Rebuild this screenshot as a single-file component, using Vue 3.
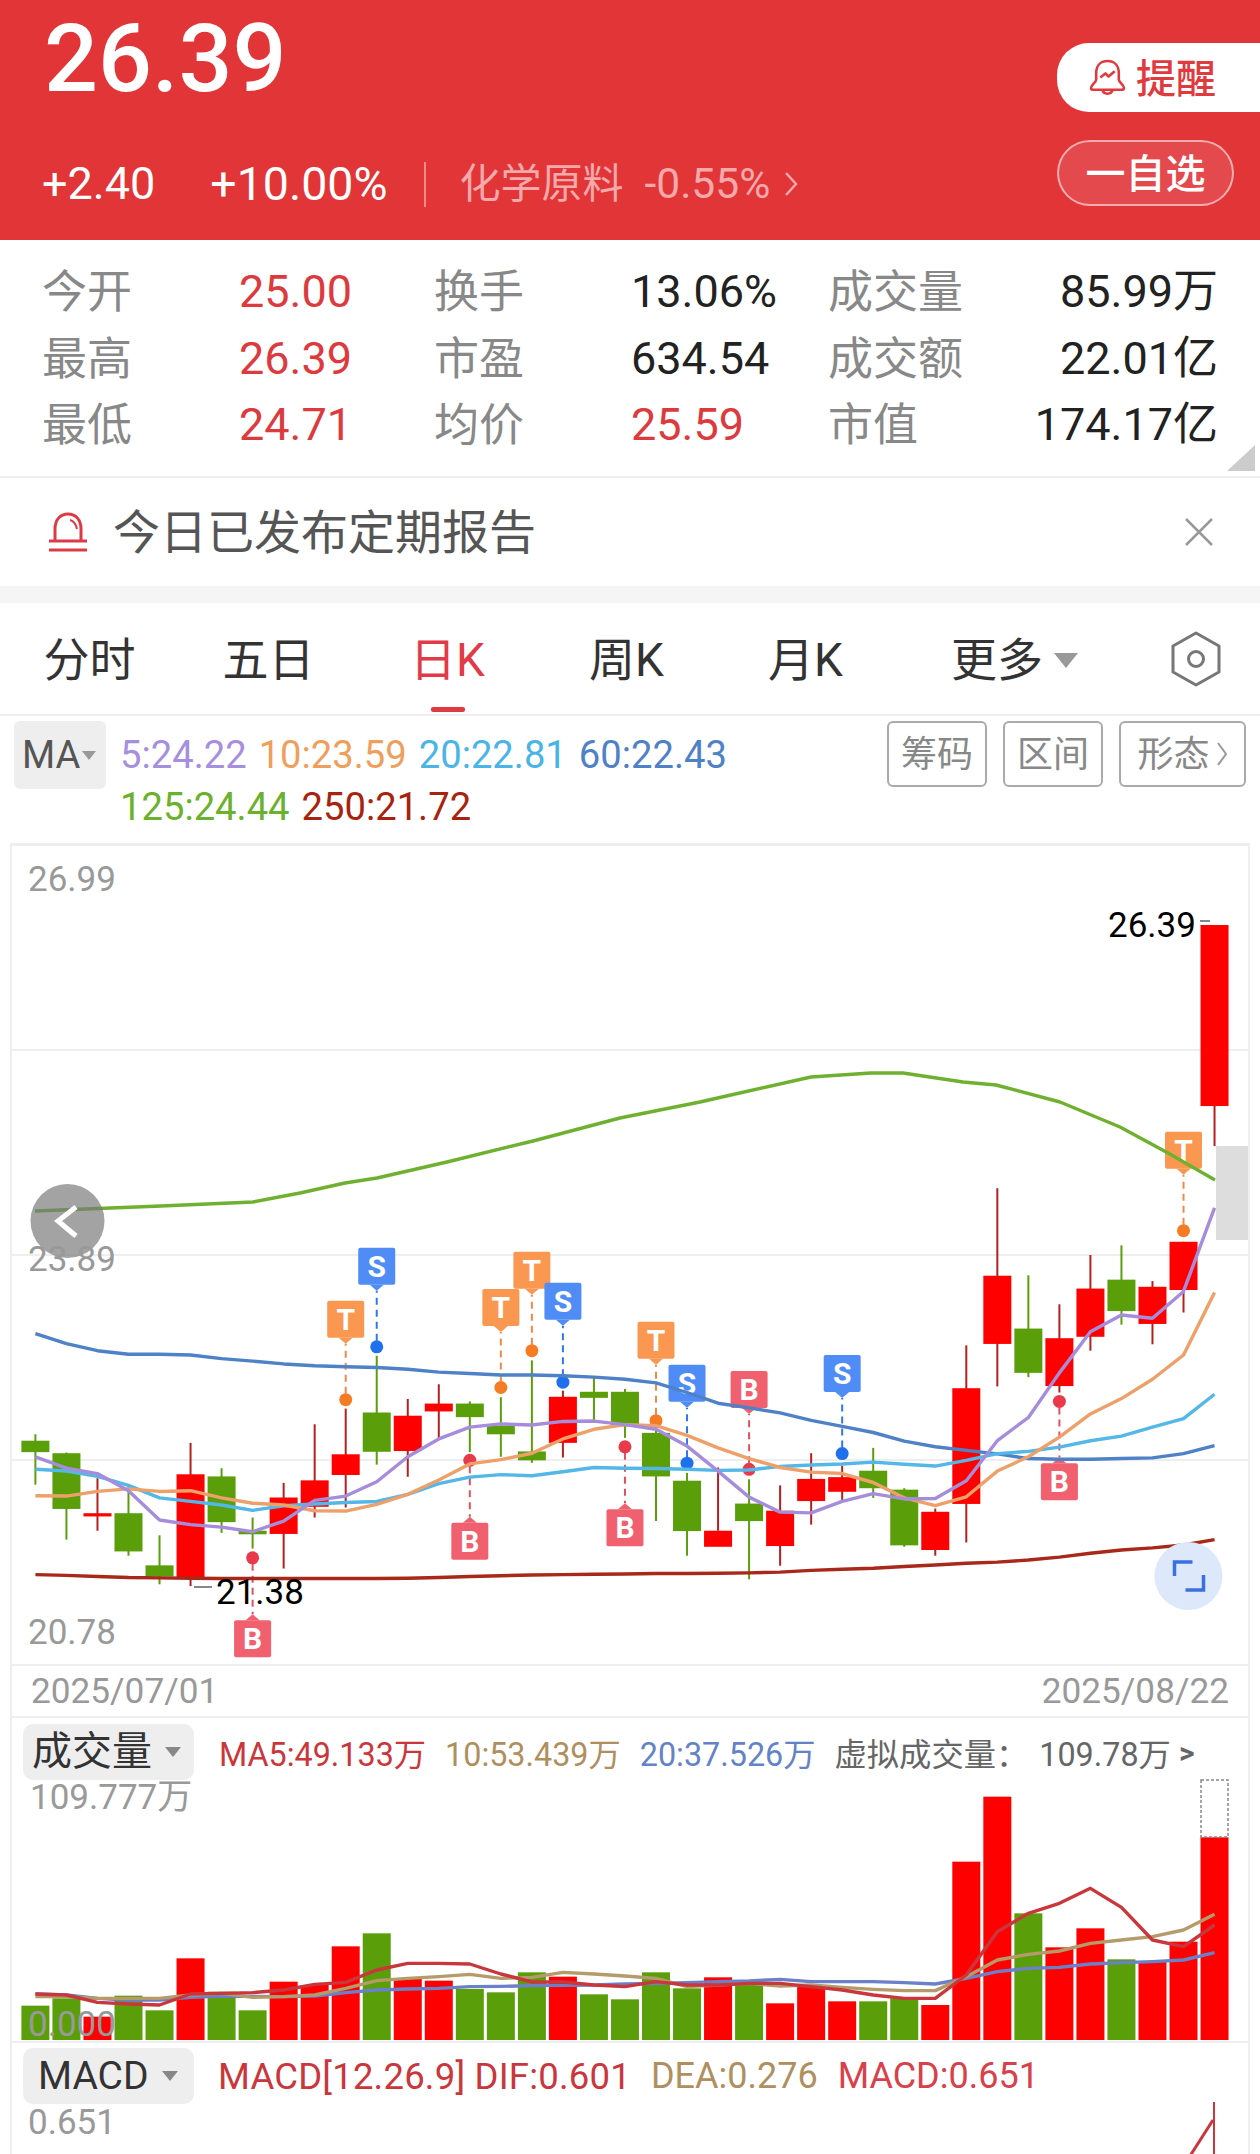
<template>
  <div class="page">
    <!-- 顶部行情 -->
    <header class="quote">
      <div class="quote-left">
        <div class="price">26.39</div>
        <div class="change">
          <span>+2.40</span>
          <span class="pct">+10.00%</span>
          <i class="divider" />
          <span class="sector">化学原料</span>
          <span class="sector-pct">-0.55%</span>
          <svg class="sector-arrow" viewBox="0 0 14 26"><path d="M2 2l10 11L2 24" /></svg>
        </div>
      </div>
      <div class="quote-right">
        <div class="remind">
          <svg viewBox="0 0 36 36" class="bell">
            <path d="M18 2C10 2 7 8 7 14v6c0 3-5 5-5 8 0 1.500 1 2 2 2h28c1 0 2-.5 2-2 0-3-5-5-5-8v-6C29 8 26 2 18 2z" />
            <path d="M11 18l5-4 3 3 6-5" />
            <path d="M13 30c1 5 9 5 10 0" />
          </svg>
          <span class="remind-text">提醒</span>
        </div>
        <div class="watch">一自选</div>
      </div>
    </header>

    <!-- 盘口数据 -->
    <section class="stats">
      <template v-for="s in stats" :key="s.label">
        <span class="stat-label">{{ s.label }}</span>
        <span :class="['stat-value', s.cls]">{{ s.value }}</span>
      </template>
      <svg class="corner" viewBox="0 0 28 26"><polygon points="0,26 28,26 28,0" /></svg>
    </section>

    <section class="notice">
      <svg class="notice-icon" viewBox="0 0 40 40">
        <path d="M7 29V17C7 8 12 2 20 2s13 6 13 15v12" />
        <path d="M1 29h38M1 38h38" />
        <path d="M22 8c4 1 6 4 7 9" stroke-width="2" />
      </svg>
      <span class="notice-text">今日已发布定期报告</span>
      <svg class="notice-close" viewBox="0 0 30 30"><path d="M2 2l26 26M28 2L2 28" /></svg>
    </section>
    <div class="band" />

    <!-- 周期切换 -->
    <nav class="tabs">
      <span v-for="t in tabs" :key="t" :class="['tab', { active: t === '日K' }]">{{ t }}</span>
      <span class="tab more">更多<i class="tri tri-more" /></span>
      <svg class="hex" viewBox="0 0 50 56">
        <polygon points="25,2 48,15 48,41 25,54 2,41 2,15" />
        <circle cx="25" cy="28" r="7.5" />
      </svg>
    </nav>

    <section class="ma-row">
      <div class="ma-chip">MA<i class="tri tri-ma" /></div>
      <div class="ma-values">
        <div>
          <span style="color: #a78fe0">5:24.22</span>
          <span style="color: #ef9f5c">10:23.59</span>
          <span style="color: #4ab4e6">20:22.81</span>
          <span style="color: #4f81c7">60:22.43</span>
        </div>
        <div>
          <span style="color: #6cb12d">125:24.44</span>
          <span style="color: #a8230f">250:21.72</span>
        </div>
      </div>
      <div class="ma-tools">
        <span class="tool">筹码</span>
        <span class="tool">区间</span>
        <span class="tool tool-wide">形态<svg viewBox="0 0 12 26"><path d="M2 2l8 11-8 11" /></svg></span>
      </div>
    </section>

    <div class="panels">
      <!-- K线 -->
      <div class="kline">
        <svg class="plot" width="1236" height="818" viewBox="12 846 1236 818">
          <line v-for="y in [1050, 1255, 1460]" :key="y" x1="12" x2="1248" :y1="y" :y2="y" stroke="#eee" stroke-width="2" />
          <g v-for="(c, i) in candles" :key="i">
            <line :x1="cx(i)" :x2="cx(i)" :y1="ky(c[2])" :y2="ky(c[3])" :stroke="c[4] === 'r' ? '#b3201f' : '#5a9e0a'" stroke-width="2" />
            <rect :x="cx(i) - 14" :y="ky(c[0])" width="28" :height="ky(c[1]) - ky(c[0])" :fill="c[4] === 'r' ? '#ff0000' : '#5a9e0a'" />
          </g>
          <g v-for="m in markers" :key="m.i + m.t">
            <line :x1="cx(m.i)" :x2="cx(m.i)" :y1="m.dashA" :y2="m.dashB" :stroke="m.line" stroke-width="2" stroke-dasharray="7 5" />
            <circle :cx="cx(m.i)" :cy="m.dotY" r="6.5" :fill="m.dot" />
            <rect :x="cx(m.i) - 18.5" :y="m.boxY" width="37" height="37" rx="2" :fill="m.box" />
            <polygon :points="m.tip" :fill="m.box" />
            <text :x="cx(m.i)" :y="m.boxY + 29" class="mark-text" text-anchor="middle">{{ m.t }}</text>
          </g>
          <polyline v-for="l in kLines" :key="l.color" :points="l.points" fill="none" :stroke="l.color" stroke-width="3.4" stroke-linejoin="round" />
          <polyline points="35,1211 161,1206 253,1202 300,1193 345,1183 377,1178 447,1162 533,1141 620,1118 700,1102 722,1097 811,1077 871,1073 903,1073 963,1082 996,1085 1060,1102 1120,1127 1168,1153 1215,1180" fill="none" stroke="#6fb030" stroke-width="3.4" stroke-linejoin="round" />
          <rect x="1216" y="1146" width="32" height="94" fill="#ddd" />
          <circle cx="67.5" cy="1221" r="37" fill="#777" fill-opacity="0.68" />
          <path d="M76 1207l-18 14 18 15" fill="none" stroke="#fff" stroke-width="5" />
          <circle cx="1188.5" cy="1576" r="34" fill="#dde8fa" />
          <path d="M1174.5 1576v-14h18M1203.5 1575v15h-18" fill="none" stroke="#3a70e0" stroke-width="3.5" />
          <text x="28" y="891" class="axis">26.99</text>
          <text x="28" y="1271" class="axis">23.89</text>
          <text x="28" y="1644" class="axis">20.78</text>
          <text x="1108" y="937" class="peak">26.39</text>
          <line x1="1200" x2="1210" y1="921" y2="921" stroke="#888" stroke-width="2" />
          <text x="216" y="1604" class="peak">21.38</text>
          <line x1="194" x2="212" y1="1587" y2="1587" stroke="#888" stroke-width="2" />
        </svg>
      </div>

      <div class="dates">
        <span>2025/07/01</span>
        <span>2025/08/22</span>
      </div>

      <!-- 成交量 -->
      <div class="vol">
        <svg class="plot" width="1236" height="323" viewBox="12 1718 1236 323">
          <rect v-for="(v, i) in volumes" :key="i" :x="cx(i) - 14" :y="vy(v[0])" width="28" :height="2040 - vy(v[0])" :fill="v[1] === 'r' ? '#ff0000' : '#5a9e0a'" />
          <rect x="1201" y="1780" width="27" height="57" fill="none" stroke="#888" stroke-width="1.5" stroke-dasharray="3 2" />
          <polyline v-for="l in volLines" :key="l.color" :points="l.points" fill="none" :stroke="l.color" stroke-width="3.4" stroke-linejoin="round" />
          <text x="30" y="1809" class="axis">109.777万</text>
          <text x="28" y="2036" class="axis">0.000</text>
        </svg>
        <div class="sub-head">
          <div class="sub-chip">成交量<i class="tri tri-sub" /></div>
          <span class="vol-ma" style="color: #c9373c">MA5:49.133万</span>
          <span class="vol-ma" style="color: #b08f5f">10:53.439万</span>
          <span class="vol-ma" style="color: #6283c6">20:37.526万</span>
          <span class="vol-ma virtual">虚拟成交量：</span>
          <span class="vol-ma virtual amount">109.78万</span>
          <span class="vol-ma virtual gt">&gt;</span>
        </div>
      </div>

      <!-- MACD -->
      <div class="macd">
        <svg class="plot" width="1236" height="111" viewBox="12 2043 1236 111">
          <line x1="1214" x2="1214" y1="2102" y2="2154" stroke="#c9373c" stroke-width="2" />
          <polyline points="1190,2156 1213,2120" fill="none" stroke="#c9373c" stroke-width="3" />
          <text x="28" y="2134" class="axis">0.651</text>
        </svg>
        <div class="sub-head">
          <div class="sub-chip macd-chip">MACD<i class="tri tri-sub" /></div>
          <span class="macd-text macd-first" style="color: #c9373c">MACD[12.26.9] DIF:0.601</span>
          <span class="macd-text" style="color: #b08f5f">DEA:0.276</span>
          <span class="macd-text" style="color: #d8404a">MACD:0.651</span>
        </div>
      </div>
    </div>
  </div>
</template>

<script setup>
const stats = [
  { label: '今开', value: '25.00', cls: 'red' },
  { label: '换手', value: '13.06%' },
  { label: '成交量', value: '85.99万', cls: 'end' },
  { label: '最高', value: '26.39', cls: 'red' },
  { label: '市盈', value: '634.54' },
  { label: '成交额', value: '22.01亿', cls: 'end' },
  { label: '最低', value: '24.71', cls: 'red' },
  { label: '均价', value: '25.59', cls: 'red' },
  { label: '市值', value: '174.17亿', cls: 'end' },
];

const tabs = ['分时', '五日', '日K', '周K', '月K'];

// 坐标换算：蜡烛等距排列，k线和量图各自一个纵向比例
const cx = (i) => 35.4 + 31.03 * i;
const ky = (v) => 1130 + v / 2.8;
const vy = (v) => 1670 + v / 3;

// [实体上, 实体下, 影线上, 影线下, 颜色]
const candles = [
  [870, 902, 852, 993, 'g'], [905, 1061, 903, 1147, 'g'], [1073, 1082, 975, 1122, 'r'], [1073, 1180, 993, 1192, 'g'],
  [1219, 1250, 1135, 1272, 'g'], [964, 1255, 876, 1277, 'r'], [970, 1098, 947, 1128, 'g'], [1122, 1132, 1085, 1172, 'g'],
  [1029, 1131, 988, 1228, 'r'], [981, 1055, 824, 1085, 'r'], [908, 966, 780, 1057, 'r'], [791, 901, 632, 937, 'g'],
  [800, 899, 753, 971, 'r'], [766, 788, 712, 862, 'r'], [766, 804, 760, 902, 'g'], [828, 852, 748, 915, 'g'],
  [900, 925, 645, 932, 'g'], [747, 876, 730, 917, 'r'], [733, 750, 690, 812, 'g'], [733, 830, 725, 862, 'g'],
  [848, 970, 820, 1095, 'g'], [982, 1123, 960, 1192, 'g'], [1122, 1167, 945, 1122, 'r'], [1046, 1095, 978, 1258, 'g'],
  [1066, 1165, 995, 1220, 'r'], [977, 1039, 905, 1105, 'r'], [972, 1013, 940, 1040, 'r'], [954, 1003, 890, 1030, 'g'],
  [1007, 1163, 1003, 1167, 'g'], [1069, 1176, 1060, 1192, 'r'], [723, 1047, 603, 1155, 'r'], [408, 599, 163, 718, 'r'],
  [556, 680, 407, 692, 'g'], [583, 717, 488, 735, 'r'], [444, 579, 350, 618, 'r'], [419, 507, 323, 545, 'g'],
  [439, 543, 423, 600, 'r'], [313, 448, 313, 511, 'r'], [-574, -67, -574, 45, 'r'],
];

const toLine = (ys, toY) => ys.map((y, i) => `${cx(i)},${toY(y)}`).join(' ');

const kLines = [
  { color: '#a8281a', ys: [1245, 1247, 1250, 1253, 1254, 1255, 1256, 1256, 1256, 1256, 1256, 1256, 1255, 1253, 1250, 1248, 1246, 1245, 1244, 1243, 1242, 1242, 1241, 1240, 1238, 1233, 1230, 1227, 1222, 1218, 1213, 1210, 1204, 1196, 1185, 1176, 1170, 1162, 1147] },
  { color: '#4f81c7', ys: [570, 598, 618, 628, 628, 630, 640, 647, 655, 660, 663, 665, 670, 678, 682, 686, 686, 688, 692, 698, 708, 735, 765, 778, 792, 813, 830, 847, 871, 887, 897, 907, 920, 922, 922, 920, 918, 906, 884] },
  { color: '#53b7e8', ys: [950, 955, 970, 995, 1030, 1040, 1050, 1065, 1052, 1047, 1043, 1040, 1020, 990, 972, 965, 968, 957, 945, 947, 948, 950, 953, 952, 942, 938, 935, 930, 936, 941, 925, 906, 900, 888, 870, 857, 832, 808, 740] },
  { color: '#eda06a', ys: [1024, 1025, 1012, 1005, 1012, 1010, 1030, 1045, 1050, 1066, 1067, 1048, 1020, 980, 935, 923, 905, 865, 838, 825, 828, 855, 890, 920, 945, 958, 962, 987, 1030, 1052, 1027, 955, 915, 860, 795, 752, 698, 630, 455] },
  { color: '#a68ddb', ys: [915, 947, 962, 1010, 1092, 1105, 1112, 1125, 1095, 1037, 1025, 985, 915, 865, 832, 823, 826, 816, 815, 825, 838, 885, 955, 1028, 1070, 1072, 1040, 1018, 1033, 1032, 982, 870, 805, 680, 565, 518, 527, 452, 218] },
].map((l) => ({ color: l.color, points: toLine(l.ys, ky) }));

const markerColors = {
  T: { box: '#fa9750', dot: '#f57c23', line: '#f08a4a' },
  S: { box: '#4f8cf5', dot: '#1f70ef', line: '#2f78e8' },
  B: { box: '#f0606f', dot: '#e83a4a', line: '#e0505e' },
};

// [蜡烛序号, 类型, 方框顶, 圆点, 尖角向上?]
const markers = [
  [10, 'T', 478, 755], [11, 'S', 330, 607], [15, 'T', 445, 721], [16, 'T', 341, 618], [17, 'S', 428, 706],
  [20, 'T', 537, 814], [21, 'S', 657, 933], [23, 'B', 675, 950], [26, 'S', 630, 906], [37, 'T', 5, 282],
  [7, 'B', 1373, 1198, true], [14, 'B', 1100, 925, true], [19, 'B', 1062, 887, true], [33, 'B', 933, 760, true],
].map(([i, t, box, dot, up]) => {
  const boxY = ky(box);
  const dotY = ky(dot);
  const x = cx(i);
  const tipY = up ? boxY - 6 : boxY + 43;
  const edgeY = up ? boxY : boxY + 37;
  return {
    i, t, boxY, dotY,
    dashA: up ? dotY + 6 : dotY - 6,
    dashB: tipY,
    tip: `${x - 7},${edgeY} ${x + 7},${edgeY} ${x},${tipY}`,
    ...markerColors[t],
  };
});

const volumes = [
  [1007, 'g'], [985, 'g'], [1040, 'r'], [977, 'g'], [1021, 'g'], [865, 'r'], [965, 'g'], [1021, 'g'], [935, 'r'], [945, 'r'],
  [829, 'r'], [790, 'g'], [925, 'r'], [932, 'r'], [957, 'g'], [967, 'g'], [907, 'g'], [920, 'r'], [973, 'g'], [988, 'g'],
  [907, 'g'], [955, 'g'], [922, 'r'], [945, 'g'], [1000, 'r'], [945, 'r'], [994, 'r'], [994, 'g'], [985, 'g'], [1005, 'r'],
  [575, 'r'], [380, 'r'], [730, 'g'], [832, 'r'], [775, 'r'], [868, 'g'], [875, 'r'], [815, 'r'], [502, 'r'],
];

const volLines = [
  { color: '#6a80c8', ys: [972, 975, 985, 990, 990, 982, 978, 979, 980, 978, 968, 960, 957, 955, 950, 949, 947, 946, 945, 942, 940, 938, 935, 933, 928, 935, 935, 935, 938, 942, 925, 905, 895, 892, 882, 878, 875, 870, 848] },
  { color: '#b59a6a', ys: [980, 980, 985, 985, 985, 975, 970, 982, 980, 975, 955, 932, 925, 920, 913, 925, 922, 907, 912, 918, 925, 950, 945, 940, 948, 945, 952, 958, 962, 962, 920, 870, 853, 843, 820, 810, 800, 780, 733] },
  { color: '#c9373c', ys: [972, 975, 997, 1002, 1005, 972, 970, 968, 960, 943, 937, 900, 880, 880, 882, 912, 936, 936, 945, 950, 935, 945, 945, 940, 940, 950, 960, 975, 985, 985, 915, 785, 730, 700, 655, 712, 810, 830, 765] },
].map((l) => ({ color: l.color, points: toLine(l.ys, vy) }));
</script>

<style scoped>
.page {
  width: 1260px;
  background: #fff;
  overflow: hidden;
  font-family: Roboto, "Noto Sans CJK SC", sans-serif;
}

.quote {
  height: 240px;
  background: #e13538;
  color: #fff;
  display: flex;
  justify-content: space-between;
  padding-left: 44px;
}
.price {
  font-size: 95px;
  line-height: 117px;
  font-weight: 500;
}
.change {
  display: flex;
  align-items: center;
  height: 52px;
  margin-top: 41px;
  margin-left: -2px;
  font-size: 45px;
  line-height: 52px;
}
.pct {
  margin-left: 55px;
  font-size: 46.5px;
}
.divider {
  width: 2px;
  height: 45px;
  margin: 0 34px 0 36px;
  background: #ee8a8c;
}
.sector {
  font-size: 41px;
  color: #f5a9aa;
}
.sector-pct {
  margin-left: 21px;
  font-size: 42.5px;
  color: #f5a9aa;
}
.sector-arrow {
  width: 14px;
  height: 26px;
  margin-left: 14px;
  fill: none;
  stroke: #f5a9aa;
  stroke-width: 2.5;
}
.quote-right {
  display: flex;
  flex-direction: column;
  padding-top: 43px;
}
.remind {
  width: 203px;
  height: 69px;
  background: #fff;
  border-radius: 32px 0 0 32px;
  color: #e0393e;
  display: flex;
  align-items: center;
  padding-left: 32px;
  box-sizing: border-box;
  font-size: 40px;
  font-weight: 500;
  line-height: 69px;
}
.remind-text {
  margin-top: 4px;
}
.bell {
  width: 37px;
  height: 37px;
  margin-right: 10px;
  fill: none;
  stroke: #e0393e;
  stroke-width: 2.5;
  stroke-linejoin: round;
}
.watch {
  width: 177px;
  height: 66px;
  margin-top: 28px;
  box-sizing: border-box;
  border: 2px solid rgba(255, 255, 255, 0.55);
  border-radius: 33px;
  background: #e4494d;
  text-align: center;
  font-size: 40px;
  font-weight: 500;
  line-height: 66px;
}

.stats {
  position: relative;
  height: 238px;
  box-sizing: border-box;
  padding: 19px 42px 0;
  border-bottom: 2px solid #eee;
  display: grid;
  grid-template-columns: 197px 195px 197px 197px 140px 1fr;
  grid-auto-rows: 66.5px;
  align-items: center;
  font-size: 45px;
  color: #222;
}
.stat-label {
  line-height: 56px;
  margin-top: 2px;
  font-size: 45px;
  color: #888;
}
.stat-value {
  line-height: 54px;
}
.stat-value.red {
  color: #dd3a3e;
}
.stat-value.end {
  text-align: right;
}
.corner {
  position: absolute;
  right: 5px;
  bottom: 5px;
  width: 28px;
  height: 26px;
  fill: #ccc;
}

.notice {
  height: 108px;
  display: flex;
  align-items: center;
  padding: 0 46px 0 48px;
}
.notice-icon {
  width: 40px;
  height: 40px;
  fill: none;
  stroke: #dc3a44;
  stroke-width: 3;
}
.notice-text {
  margin: 2px 0 0 25px;
  flex: 1;
  font-size: 47px;
  line-height: 60px;
  color: #555;
}
.notice-close {
  width: 30px;
  height: 30px;
  fill: none;
  stroke: #999;
  stroke-width: 2.5;
}
.band {
  height: 17px;
  background: #f5f5f5;
}

.tabs {
  position: relative;
  height: 113px;
  box-sizing: border-box;
  padding-top: 3px;
  border-bottom: 2px solid #eee;
  display: grid;
  grid-template-columns: repeat(5, 179px) 1fr;
  align-items: center;
  font-size: 46px;
  line-height: 60px;
  color: #333;
  text-align: center;
}
.tab.active {
  position: relative;
  color: #e23a48;
}
.tab.active::after {
  content: "";
  position: absolute;
  left: 50%;
  bottom: -22px;
  width: 34px;
  height: 5px;
  margin-left: -17px;
  border-radius: 2px;
  background: #dd3a42;
}
.more {
  text-align: left;
  padding-left: 56px;
  display: flex;
  align-items: center;
}
.hex {
  position: absolute;
  right: 39px;
  top: 28px;
  width: 50px;
  height: 56px;
  fill: none;
  stroke: #777;
  stroke-width: 3;
  stroke-linejoin: round;
}
.tri {
  display: inline-block;
  width: 0;
  height: 0;
  border-style: solid;
  border-color: #999 transparent transparent;
}
.tri-more {
  margin-left: 11px;
  border-width: 15px 12px 0;
}
.tri-ma {
  margin-left: 2px;
  border-width: 9px 7px 0;
}
.tri-sub {
  margin-left: 13px;
  border-width: 10px 8px 0;
  border-top-color: #888;
}

.ma-row {
  height: 127px;
  box-sizing: border-box;
  padding: 5px 14px 0;
  display: flex;
  align-items: flex-start;
}
.ma-chip {
  width: 92px;
  height: 68px;
  background: #eee;
  border-radius: 6px;
  display: flex;
  align-items: center;
  padding-left: 8px;
  box-sizing: border-box;
  font-size: 38px;
  color: #555;
}
.ma-values {
  flex: 1;
  margin-left: 14px;
  padding-top: 8px;
  font-size: 38.2px;
  line-height: 52px;
}
.ma-values span {
  margin-right: 12px;
}
.ma-tools {
  display: flex;
  gap: 16px;
}
.tool {
  width: 100px;
  height: 66px;
  box-sizing: border-box;
  border: 2px solid #aaa;
  border-radius: 6px;
  font-size: 36px;
  line-height: 64px;
  color: #888;
  text-align: center;
}
.tool-wide {
  width: 127px;
}
.tool-wide svg {
  width: 12px;
  height: 26px;
  margin-left: 6px;
  fill: none;
  stroke: #999;
  stroke-width: 2;
}

.panels {
  width: 1240px;
  margin-left: 10px;
  box-sizing: border-box;
  border-left: 2px solid #eee;
  border-right: 2px solid #eee;
}
.kline {
  position: relative;
  height: 818px;
  border-top: 3px solid #eee;
  border-bottom: 2px solid #eee;
}
.plot {
  position: absolute;
  left: 0;
  top: 0;
  display: block;
  overflow: visible;
}
.axis {
  font-size: 35px;
  fill: #999;
}
.peak {
  font-size: 35px;
  fill: #000;
}
.mark-text {
  font-size: 30px;
  font-weight: 700;
  fill: #fff;
}
.dates {
  height: 50px;
  padding: 0 19px 0 19px;
  border-bottom: 2px solid #eee;
  display: flex;
  justify-content: space-between;
  align-items: center;
  font-size: 35.2px;
  color: #999;
}

.vol {
  position: relative;
  height: 323px;
  border-bottom: 2px solid #eee;
}
.macd {
  position: relative;
  height: 111px;
  overflow: hidden;
}
.sub-head {
  position: relative;
  display: flex;
  align-items: center;
  padding: 6px 0 0 11px;
}
.macd .sub-head {
  padding-top: 5px;
}
.sub-chip {
  width: 171px;
  height: 56px;
  box-sizing: border-box;
  padding-left: 9px;
  background: #eee;
  border-radius: 10px;
  display: flex;
  align-items: center;
  font-size: 40px;
  line-height: 54px;
  color: #333;
  margin-right: 25px;
}
.macd-chip {
  padding-left: 15px;
  font-size: 39px;
  margin-right: 24px;
}
.vol-ma {
  font-size: 32.3px;
  margin-right: 19px;
}
.virtual {
  color: #666;
  margin-right: 0;
}
.amount {
  margin-left: 11px;
}
.gt {
  margin-left: 8px;
  font-size: 30px;
  font-weight: 700;
}
.macd-text {
  font-size: 36px;
  margin-right: 20px;
}
.macd-first {
  font-size: 36.5px;
  letter-spacing: 0.2px;
}
</style>
